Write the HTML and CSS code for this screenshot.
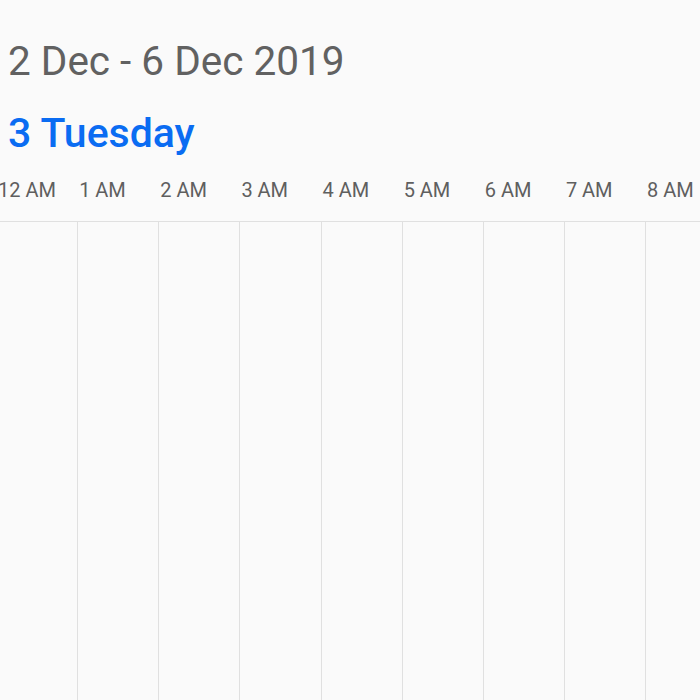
FILE: index.html
```html
<!DOCTYPE html>
<html lang="en">
<head>
    <meta charset="UTF-8">
    <meta name="viewport" content="width=device-width, initial-scale=1.0">
    <title>Timeline Day</title>
    <link rel="stylesheet" href="styles.css">
</head>
<body>
    <div class="header">
        <div class="range">2 Dec - 6 Dec 2019</div>
        <div class="day">3 Tuesday</div>
    </div>
    <div class="timeline">
        <div class="labels">
            <div class="slot">12 AM</div>
            <div class="slot">1 AM</div>
            <div class="slot">2 AM</div>
            <div class="slot">3 AM</div>
            <div class="slot">4 AM</div>
            <div class="slot">5 AM</div>
            <div class="slot">6 AM</div>
            <div class="slot">7 AM</div>
            <div class="slot">8 AM</div>
        </div>
        <div class="grid">
            <div class="cell"></div>
            <div class="cell"></div>
            <div class="cell"></div>
            <div class="cell"></div>
            <div class="cell"></div>
            <div class="cell"></div>
            <div class="cell"></div>
            <div class="cell"></div>
            <div class="cell"></div>
        </div>
    </div>
</body>
</html>
```
FILE: styles.css
```css
body {
    font-family: Roboto, Arial, sans-serif;
    background: #fafafa;
    margin: 0;
    padding: 0;
    height: 700px;
    overflow: hidden;
}

.header {
    padding: 37px 0 0 8px;
}

.range {
    font-size: 40.5px;
    line-height: 48px;
    color: #616161;
}

.day {
    font-size: 41px;
    line-height: 48px;
    font-weight: 500;
    color: #0a6cf2;
    margin-top: 24px;
}

.timeline {
    margin-top: 17px;
    margin-left: -3px;
}

.labels {
    display: flex;
    height: 47px;
    border-bottom: 1px solid #e0e0e0;
    margin-left: 3px;
}

.labels .slot:first-child {
    margin-left: -3px;
}

.slot {
    flex: 0 0 81.14px;
    padding-left: 1px;
    box-sizing: border-box;
    font-size: 20px;
    line-height: 28px;
    padding-top: 2px;
    color: #5f5f5f;
    white-space: nowrap;
}

.grid {
    display: flex;
    height: 500px;
}

.cell {
    flex: 0 0 81.14px;
    box-sizing: border-box;
    border-right: 1px solid #e0e0e0;
}
```
